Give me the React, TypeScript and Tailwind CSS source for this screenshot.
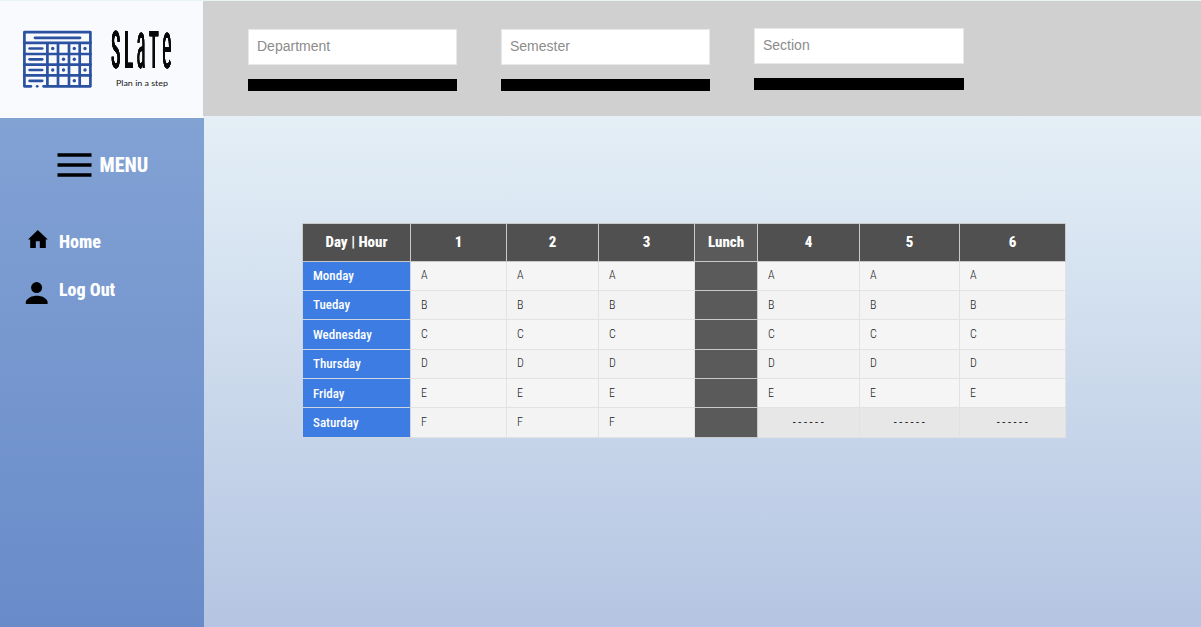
const CONDENSED =
  "font-['Roboto_Condensed','Roboto','Liberation_Sans_Narrow',sans-serif] [font-stretch:75%]";

function CalendarLogo() {
  const rows = [48.5, 59.3, 70, 80.8];
  const dots = [
    [52.7, 48.5], [74.3, 48.5], [85, 48.5],
    [63.5, 59.3], [74.3, 59.3],
    [52.7, 70], [63.5, 70], [85, 70],
    [74.3, 80.8],
  ];
  return (
    <svg className="size-full" viewBox="0 0 204 117">
      <g fill="none" stroke="#2a52a0" strokeWidth="2.7" strokeLinecap="round" strokeLinejoin="round">
        <path d="M31 86.3H24.4V32.2H90.4V86.3H43.5" />
        <path d="M24.2 42.8H90.6M24.2 54H90.6M24.2 64.7H90.6M24.2 75.4H90.6M47.4 42.8V86M58 42.8V86M69 42.8V86M79.7 42.8V86" />
        <path d="M35 37.8H80" strokeWidth="2.8" />
        {rows.map((y) => (
          <path key={y} d={`M29.6 ${y}H42.2`} strokeWidth="2.7" />
        ))}
      </g>
      <g fill="#2a52a0">
        {dots.map(([x, y]) => (
          <circle key={`${x}-${y}`} cx={x} cy={y} r="1.7" />
        ))}
        <circle cx="37.2" cy="86.3" r="1.4" />
      </g>
      <g
        className={`${CONDENSED} [filter:drop-shadow(0.8px_0_0_#080808)_drop-shadow(0.8px_0_0_#080808)]`}
        fontSize="51"
        fontWeight="500"
        fill="#080808"
      >
        <text transform="translate(111 67.5) scale(.35 1.01)">S</text>
        <text transform="translate(124 67.5) scale(.38 1.01)">L</text>
        <text fontWeight="400" transform="translate(136.4 67.5) scale(.37 1.32)">a</text>
        <text transform="translate(149 67.5) scale(.36 1.01)">T</text>
        <text fontWeight="400" transform="translate(162 67.5) scale(.4 1.32)">e</text>
      </g>
      <text
        x="116"
        y="86.3"
        className="font-['Lato',sans-serif]"
        fontSize="8"
        fill="#151515"
        textLength="52"
        lengthAdjust="spacingAndGlyphs"
      >
        Plan in a step
      </text>
    </svg>
  );
}

function Field({ label, className }: { label: string; className: string }) {
  return (
    <div className={className}>
      <input
        type="text"
        placeholder={label}
        className="block h-9 w-full border border-[#e8e8e8] bg-white px-2 pb-[3px] text-[14px] outline-none placeholder:text-[#8c8c8c]"
      />
      <div className="mt-[14px] h-3 bg-black" />
    </div>
  );
}

const days: [string, string][] = [
  ["Monday", "A"],
  ["Tueday", "B"],
  ["Wednesday", "C"],
  ["Thursday", "D"],
  ["Friday", "E"],
  ["Saturday", "F"],
];

function Timetable() {
  const heads = ["Day | Hour", "1", "2", "3", "Lunch", "4", "5", "6"];
  return (
    <table className={`${CONDENSED} ml-[98px] mt-[107px] w-[763px] table-fixed border-collapse text-[12px] font-[350] text-[#222]`}>
      <colgroup>
        <col className="w-[108px]" />
        <col className="w-[96px]" />
        <col className="w-[92px]" />
        <col className="w-[96px]" />
        <col className="w-[63px]" />
        <col className="w-[102px]" />
        <col className="w-[100px]" />
        <col className="w-[106px]" />
      </colgroup>
      <thead>
        <tr className="h-[37.5px]">
          {heads.map((h) => (
            <th
              key={h}
              className={`border border-[#c9c9c9] p-0 text-[15px] font-extrabold text-white ${h === "Lunch" ? "bg-[#5a5a5a]" : "bg-[#505050]"}`}
            >
              {h}
            </th>
          ))}
        </tr>
      </thead>
      <tbody>
        {days.map(([day, subject], i) => {
          const shade = i % 2 === 0 ? "bg-[#f5f5f5]" : "bg-[#f3f3f3]";
          const cell = `border border-[#e2e2e2] p-0 pl-[10px] pb-px ${shade}`;
          return (
            <tr key={day} className="h-[29.4px]">
              <td className="border border-[#cfd5df] bg-[#3d7de3] p-0 pl-[10px] text-[13px] font-medium text-white">{day}</td>
              <td className={cell}>{subject}</td>
              <td className={cell}>{subject}</td>
              <td className={cell}>{subject}</td>
              <td className="border border-[#c9c9c9] bg-[#5a5a5a] p-0" />
              {[4, 5, 6].map((hour) =>
                day === "Saturday" ? (
                  <td key={hour} className="border border-[#e2e2e2] bg-[#e7e7e7] p-0 pb-px pl-[2px] text-center font-normal tracking-[2.6px]">------</td>
                ) : (
                  <td key={hour} className={cell}>{subject}</td>
                ),
              )}
            </tr>
          );
        })}
      </tbody>
    </table>
  );
}

export default function App() {
  return (
    <div className="flex h-[627px] w-[1201px] overflow-hidden bg-[#e6f4f4] pt-px font-['Liberation_Sans',sans-serif]">
      <aside className="flex w-[204px] flex-none flex-col">
        <div className="h-[117px] w-[203px] bg-[#f9fafd]">
          <div className="-mt-px h-[117px] w-[204px]">
            <CalendarLogo />
          </div>
        </div>
        <nav className={`${CONDENSED} flex-1 bg-linear-to-b from-[#82a2d4] to-[#698bc9] font-extrabold text-white`}>
          <div className="flex h-[94px] items-center pl-[57px] text-[20px]">
            <svg className="mr-[7.5px] h-6 w-[35px] flex-none" viewBox="0 0 35 24">
              <path d="M.5 2H34.5M.5 12H34.5M.5 22H34.5" stroke="#000" strokeWidth="3.3" />
            </svg>
            MENU
          </div>
          <div className="mt-[5px] flex h-[48px] items-center pl-[26px] text-[18px]">
            <svg className="mr-[9px] size-6 flex-none" viewBox="0 0 24 24">
              <path d="M4.2 19V10.6H2L11.8 1L21.8 10.6H19.8V19H13.8V12.3H9.8V19Z" />
            </svg>
            <span>Home</span>
          </div>
          <div className="flex h-[48px] items-center pl-[25px] text-[18px]">
            <svg className="mr-[10px] mt-[7px] size-6 flex-none" viewBox="0 0 24 24">
              <circle cx="11.6" cy="6.6" r="5.5" />
              <path d="M.8 23V20.7C2.2 16.8 7 14.7 11.8 14.7S21.4 16.8 22.6 20.7V23Z" />
            </svg>
            <span>Log Out</span>
          </div>
        </nav>
      </aside>
      <main className="flex-1 bg-linear-to-b from-[#e4eff6] from-[115px] to-[#b5c5e2]">
        <header className="-ml-px flex h-[115px] bg-[#d0d0d0] pl-[45px] pt-7">
          <Field label="Department" className="mr-11 w-[209px]" />
          <Field label="Semester" className="mr-11 w-[209px]" />
          <Field label="Section" className="-mt-px w-[210px]" />
        </header>
        <Timetable />
      </main>
    </div>
  );
}
